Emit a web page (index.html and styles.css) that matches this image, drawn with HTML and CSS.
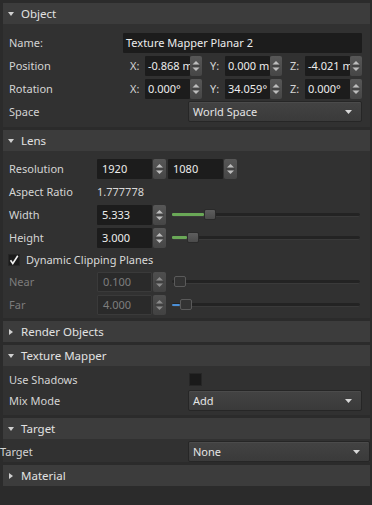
FILE: index.html
```html
<!DOCTYPE html>
<html>
<head>
<meta charset="utf-8">
<link rel="stylesheet" href="styles.css">
</head>
<body>
<div class="panel">

  <section class="group">
    <div class="head"><span class="tri down"></span>Object</div>
    <div class="body b-object">
      <div class="row"><span class="lbl l-obj">Name:</span><div class="field grow txt">Texture Mapper Planar 2</div></div>
      <div class="row"><span class="lbl l-obj">Position</span>
        <div class="vec">
          <div class="cell"><span class="axis">X:</span><div class="field num">-0.868 m</div><span class="spin"><svg width="12" height="20" viewBox="0 0 12 20"><path class="ar" d="M2.5 8.5 6 5 9.5 8.5Z"/><path class="ln" d="M2 10h8"/><path class="ar" d="M2.5 11.5 6 15 9.5 11.5Z"/></svg></span></div>
          <div class="cell"><span class="axis">Y:</span><div class="field num">0.000 m</div><span class="spin"><svg width="12" height="20" viewBox="0 0 12 20"><path class="ar" d="M2.5 8.5 6 5 9.5 8.5Z"/><path class="ln" d="M2 10h8"/><path class="ar" d="M2.5 11.5 6 15 9.5 11.5Z"/></svg></span></div>
          <div class="cell"><span class="axis">Z:</span><div class="field num">-4.021 m</div><span class="spin"><svg width="12" height="20" viewBox="0 0 12 20"><path class="ar" d="M2.5 8.5 6 5 9.5 8.5Z"/><path class="ln" d="M2 10h8"/><path class="ar" d="M2.5 11.5 6 15 9.5 11.5Z"/></svg></span></div>
        </div>
      </div>
      <div class="row"><span class="lbl l-obj">Rotation</span>
        <div class="vec">
          <div class="cell"><span class="axis">X:</span><div class="field num">0.000°</div><span class="spin"><svg width="12" height="20" viewBox="0 0 12 20"><path class="ar" d="M2.5 8.5 6 5 9.5 8.5Z"/><path class="ln" d="M2 10h8"/><path class="ar" d="M2.5 11.5 6 15 9.5 11.5Z"/></svg></span></div>
          <div class="cell"><span class="axis">Y:</span><div class="field num">34.059°</div><span class="spin"><svg width="12" height="20" viewBox="0 0 12 20"><path class="ar" d="M2.5 8.5 6 5 9.5 8.5Z"/><path class="ln" d="M2 10h8"/><path class="ar" d="M2.5 11.5 6 15 9.5 11.5Z"/></svg></span></div>
          <div class="cell"><span class="axis">Z:</span><div class="field num">0.000°</div><span class="spin"><svg width="12" height="20" viewBox="0 0 12 20"><path class="ar" d="M2.5 8.5 6 5 9.5 8.5Z"/><path class="ln" d="M2 10h8"/><path class="ar" d="M2.5 11.5 6 15 9.5 11.5Z"/></svg></span></div>
        </div>
      </div>
      <div class="row"><span class="lbl l-wide">Space</span><div class="combo">World Space<svg class="caret" width="7" height="4" viewBox="0 0 7 4"><path d="M0 0h7L3.5 4Z"/></svg></div></div>
    </div>
  </section>

  <section class="group">
    <div class="head"><span class="tri down"></span>Lens</div>
    <div class="body b-lens">
      <div class="row"><span class="lbl l-lens">Resolution</span>
        <div class="field lens">1920</div><span class="spin s13"><svg width="13" height="20" viewBox="0 0 13 20"><path class="ar" d="M3 8.5 6.5 5 10 8.5Z"/><path class="ln" d="M2 10h9"/><path class="ar" d="M3 11.5 6.5 15 10 11.5Z"/></svg></span>
        <div class="field lens second">1080</div><span class="spin s13"><svg width="13" height="20" viewBox="0 0 13 20"><path class="ar" d="M3 8.5 6.5 5 10 8.5Z"/><path class="ln" d="M2 10h9"/><path class="ar" d="M3 11.5 6.5 15 10 11.5Z"/></svg></span>
      </div>
      <div class="row"><span class="lbl l-lens">Aspect Ratio</span><span class="value">1.777778</span></div>
      <div class="row"><span class="lbl l-lens">Width</span>
        <div class="field lens">5.333</div><span class="spin s13"><svg width="13" height="20" viewBox="0 0 13 20"><path class="ar" d="M3 8.5 6.5 5 10 8.5Z"/><path class="ln" d="M2 10h9"/><path class="ar" d="M3 11.5 6.5 15 10 11.5Z"/></svg></span>
        <div class="slider"><div class="groove"><div class="fill green" style="width:32px"></div></div><span class="handle" style="left:32px"></span></div>
      </div>
      <div class="row"><span class="lbl l-lens">Height</span>
        <div class="field lens">3.000</div><span class="spin s13"><svg width="13" height="20" viewBox="0 0 13 20"><path class="ar" d="M3 8.5 6.5 5 10 8.5Z"/><path class="ln" d="M2 10h9"/><path class="ar" d="M3 11.5 6.5 15 10 11.5Z"/></svg></span>
        <div class="slider"><div class="groove"><div class="fill green" style="width:15px"></div></div><span class="handle" style="left:15px"></span></div>
      </div>
      <div class="row check-row"><span class="checkbox"><svg width="12" height="12" viewBox="0 0 12 12"><path d="M2.5 6.2 4.8 9.5 9.8 1.8" /></svg></span><span class="check-label">Dynamic Clipping Planes</span></div>
      <div class="row disabled"><span class="lbl l-lens">Near</span>
        <div class="field lens">0.100</div><span class="spin s13"><svg width="13" height="20" viewBox="0 0 13 20"><path class="ar" d="M3 8.5 6.5 5 10 8.5Z"/><path class="ln" d="M2 10h9"/><path class="ar" d="M3 11.5 6.5 15 10 11.5Z"/></svg></span>
        <div class="slider"><div class="groove"></div><span class="handle" style="left:2px"></span></div>
      </div>
      <div class="row disabled"><span class="lbl l-lens">Far</span>
        <div class="field lens">4.000</div><span class="spin s13"><svg width="13" height="20" viewBox="0 0 13 20"><path class="ar" d="M3 8.5 6.5 5 10 8.5Z"/><path class="ln" d="M2 10h9"/><path class="ar" d="M3 11.5 6.5 15 10 11.5Z"/></svg></span>
        <div class="slider"><div class="groove"><div class="fill blue" style="width:8px"></div></div><span class="handle" style="left:8px"></span></div>
      </div>
    </div>
  </section>

  <section class="group">
    <div class="head"><span class="tri right"></span>Render Objects</div>
  </section>

  <section class="group">
    <div class="head"><span class="tri down"></span>Texture Mapper</div>
    <div class="body b-tex">
      <div class="row"><span class="lbl l-wide">Use Shadows</span><span class="checkbox empty"></span></div>
      <div class="row"><span class="lbl l-wide">Mix Mode</span><div class="combo">Add<svg class="caret" width="7" height="4" viewBox="0 0 7 4"><path d="M0 0h7L3.5 4Z"/></svg></div></div>
    </div>
  </section>

  <section class="group">
    <div class="head"><span class="tri down"></span>Target</div>
    <div class="body b-target">
      <div class="row flush"><span class="lbl l-flush">Target</span><div class="combo">None<svg class="caret" width="7" height="4" viewBox="0 0 7 4"><path d="M0 0h7L3.5 4Z"/></svg></div></div>
    </div>
  </section>

  <section class="group">
    <div class="head"><span class="tri right"></span>Material</div>
  </section>

</div>
</body>
</html>
```

FILE: styles.css
```css
* { box-sizing: border-box; }

html, body {
  margin: 0;
  padding: 0;
  background: #2b2b2b;
  width: 372px;
  height: 505px;
  overflow: hidden;
}

body {
  font-family: "Noto Sans", "Open Sans", sans-serif;
  font-size: 11px;
  color: #d6d6d6;
}

.panel {
  padding: 0 2px 0 3px;
}

.group {
  margin-top: 3px;
  background: #313131;
}

.head {
  height: 21px;
  background: #3c3c3c;
  display: flex;
  align-items: center;
  color: #e2e2e2;
  font-size: 11.5px;
}

.tri {
  width: 0;
  height: 0;
  margin-right: 7px;
}

.tri.down {
  margin-left: 5px;
  border-left: 3px solid transparent;
  border-right: 3px solid transparent;
  border-top: 4px solid #d0d0d0;
}

.tri.right {
  margin-left: 6px;
  margin-right: 8px;
  border-top: 3.5px solid transparent;
  border-bottom: 3.5px solid transparent;
  border-left: 4px solid #d0d0d0;
}

.body {
  display: flex;
  flex-direction: column;
}

.b-object { padding: 8px 0 5px; gap: 2px; }
.b-lens { padding: 7px 0 3px; gap: 2px; }
.b-tex { padding: 3px 0 4px; gap: 1px; }
.b-target { padding: 2px 0 0; }

.row {
  height: 21px;
  display: flex;
  align-items: center;
  padding-left: 6px;
  padding-right: 8px;
}

.b-tex .row:first-child { height: 20px; }

.lbl {
  flex: none;
  color: #d4d4d4;
}

.l-obj { width: 113px; }
.l-wide { width: 179px; }
.l-lens { width: 88px; }

.row.flush {
  margin: 0 -2px 0 -3px;
  padding: 0 2px 0 0;
}
.l-flush { width: 188px; }

.field {
  height: 20px;
  line-height: 20px;
  background: #1c1c1c;
  color: #ececec;
  white-space: nowrap;
  overflow: hidden;
  border-radius: 1px;
}

.field.grow {
  flex: 1;
  margin-left: 1px;
  padding-left: 3px;
}

.vec {
  flex: 1;
  display: flex;
}

.cell {
  width: 80px;
  display: flex;
  align-items: center;
}

.axis {
  width: 13px;
  margin-left: 8px;
  margin-right: 2px;
  color: #d4d4d4;
}

.field.num {
  flex: 1;
  min-width: 0;
  padding-left: 3px;
}

.spin {
  flex: none;
  width: 12px;
  height: 20px;
  background: linear-gradient(#575757, #464646);
  border-radius: 2px;
  display: block;
}

.spin.s13 { width: 13px; margin-left: 1px; }

.spin svg { display: block; }
.spin .ar { fill: #bdbdbd; }
.spin .ln { stroke: #3b3b3b; stroke-width: 1; }

.field.lens {
  width: 55px;
  padding-left: 5px;
}

.field.second { margin-left: 2px; }

.value { color: #d8d8d8; }

.combo {
  flex: 1;
  height: 21px;
  display: flex;
  align-items: center;
  justify-content: space-between;
  padding: 0 9px 0 4px;
  background: linear-gradient(#434343, #3a3a3a);
  border: 1px solid #262626;
  border-radius: 2px;
  box-shadow: inset 0 1px 0 #4b4b4b;
  color: #e4e4e4;
}

.caret path { fill: #d8d8d8; }

.slider {
  position: relative;
  flex: 1;
  height: 12px;
  margin-left: 6px;
  margin-right: 2px;
  display: flex;
  align-items: center;
}

.groove {
  width: 100%;
  height: 4px;
  background: #232323;
  border-bottom: 1px solid #3a3a3a;
  border-radius: 2px;
  display: flex;
}

.fill {
  height: 3px;
  border-radius: 1px;
}

.fill.green { background: #6aa857; }
.fill.blue { background: #4b8fd6; height: 2px; margin-top: 1px; }

.handle {
  position: absolute;
  top: 0;
  width: 12px;
  height: 11px;
  background: linear-gradient(#5e5e5e, #4b4b4b);
  border: 1px solid #2a2a2a;
  border-radius: 2px;
}

.check-row { height: 19px; padding-left: 5px; }

.checkbox {
  flex: none;
  width: 12px;
  height: 12px;
  background: #1b1b1b;
  border: 1px solid #262626;
  display: block;
}

.checkbox svg { display: block; margin: -1px; }
.checkbox svg path {
  fill: none;
  stroke: #f0f0f0;
  stroke-width: 1.6;
}

.checkbox.empty {
  width: 13px;
  height: 13px;
  margin-left: 1px;
  background: #1a1a1a;
}

.check-label {
  margin-left: 6px;
  color: #dadada;
}

.disabled .lbl { color: #7c7c7c; }
.disabled .field {
  background: #2a2a2a;
  border: 1px solid #3a3a3a;
  color: #7e7e7e;
  line-height: 18px;
}
.disabled .spin { background: linear-gradient(#4e4e4e, #424242); }
.disabled .spin .ar { fill: #8a8a8a; }
.disabled .handle {
  background: #333;
  border: 1px solid #5a5a5a;
}
```
